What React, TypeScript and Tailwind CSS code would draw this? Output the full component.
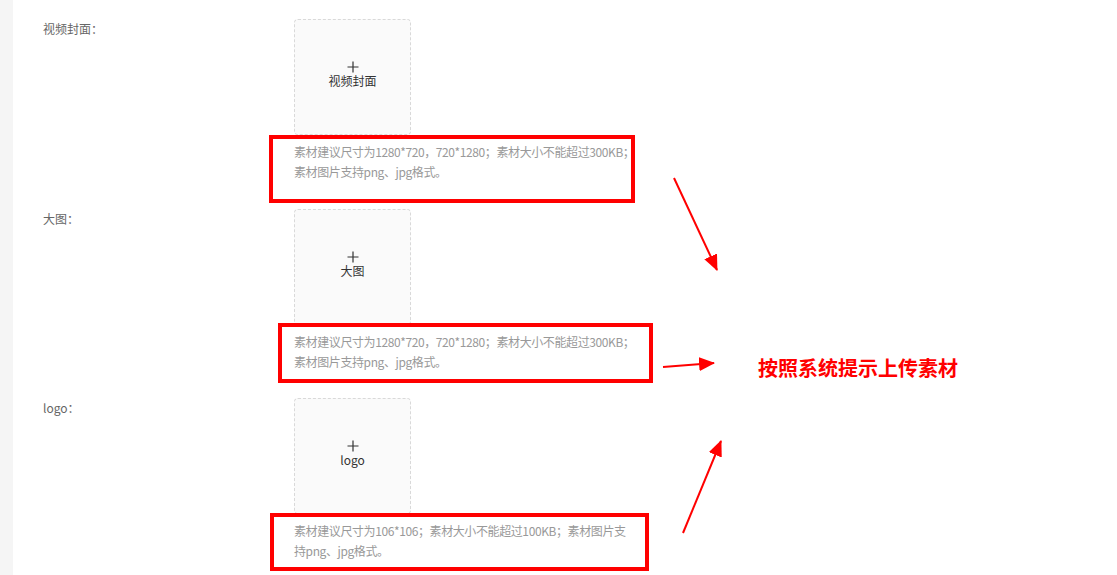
import { Fragment } from 'react';

type Field = {
  label: string;
  placeholder: string;
  hint: string[];
};

const fields: Field[] = [
  {
    label: '视频封面：',
    placeholder: '视频封面',
    hint: ['素材建议尺寸为1280*720，720*1280；素材大小不能超过300KB；', '素材图片支持png、jpg格式。'],
  },
  {
    label: '大图：',
    placeholder: '大图',
    hint: ['素材建议尺寸为1280*720，720*1280；素材大小不能超过300KB；', '素材图片支持png、jpg格式。'],
  },
  {
    label: 'logo：',
    placeholder: 'logo',
    hint: ['素材建议尺寸为106*106；素材大小不能超过100KB；素材图片支', '持png、jpg格式。'],
  },
];

// annotation boxes drawn over the form
const marks = [
  'left-[269px] top-[135px] w-[366px] h-[68px]',
  'left-[278px] top-[323px] w-[375px] h-[60px]',
  'left-[270px] top-[513px] w-[379px] h-[58px]',
];

const PlusMark = () => (
  <svg width="12" height="12" viewBox="0 0 12 12" className="text-[#333]">
    <path d="M6 0.5V11.5M0.5 6H11.5" stroke="currentColor" strokeWidth="1.2" />
  </svg>
);

const UploadField = ({ field }: { field: Field }) => (
  <div className="flex h-[189.5px]">
    <div className="w-[251px] text-[12px] leading-[20px] text-[#666]">{field.label}</div>
    <div className="flex flex-col">
      <div className="flex h-[116px] w-[117px] flex-col items-center justify-center rounded-[4px] border border-dashed border-[#d9d9d9] bg-[#fafafa] pb-[4px]">
        <PlusMark />
        <span className="text-[12px] leading-[16px] text-[#333]">{field.placeholder}</span>
      </div>
      <div className="mt-[7px] text-[12px] leading-[20px] tracking-[-0.4px] text-[#999]">
        {field.hint.map((line, i) => (
          <Fragment key={i}>
            <div className="whitespace-nowrap">{line}</div>
          </Fragment>
        ))}
      </div>
    </div>
  </div>
);

export default function App() {
  return (
    <div
      className="relative flex h-[575px] w-[1117px] overflow-hidden bg-white"
      style={{ fontFamily: '"Noto Sans CJK SC", "Noto Sans", sans-serif' }}
    >
      <div className="w-[13px] shrink-0 bg-[#f5f5f5]" />
      <div className="pl-[30px] pt-[19px]">
        {fields.map((f) => (
          <UploadField key={f.label} field={f} />
        ))}
      </div>

      {marks.map((m, i) => (
        <div key={i} className={`absolute border-4 border-[#ff0000] ${m}`} />
      ))}

      <svg className="absolute left-0 top-0" width="1117" height="575">
        <defs>
          <marker
            id="head"
            markerUnits="userSpaceOnUse"
            markerWidth="16"
            markerHeight="14"
            viewBox="0 0 16 14"
            refX="15"
            refY="7"
            orient="auto"
          >
            <path d="M0 0L16 7L0 14Z" fill="#ff0000" />
          </marker>
        </defs>
        <line x1="674" y1="178" x2="717" y2="270" stroke="#ff0000" strokeWidth="2" markerEnd="url(#head)" />
        <line x1="663" y1="367" x2="714" y2="363" stroke="#ff0000" strokeWidth="2" markerEnd="url(#head)" />
        <line x1="683" y1="533" x2="721" y2="441" stroke="#ff0000" strokeWidth="2" markerEnd="url(#head)" />
      </svg>

      <div className="absolute left-[758px] top-[356px] text-[20px] font-bold leading-[24px] text-[#ff0000]">
        按照系统提示上传素材
      </div>
    </div>
  );
}
